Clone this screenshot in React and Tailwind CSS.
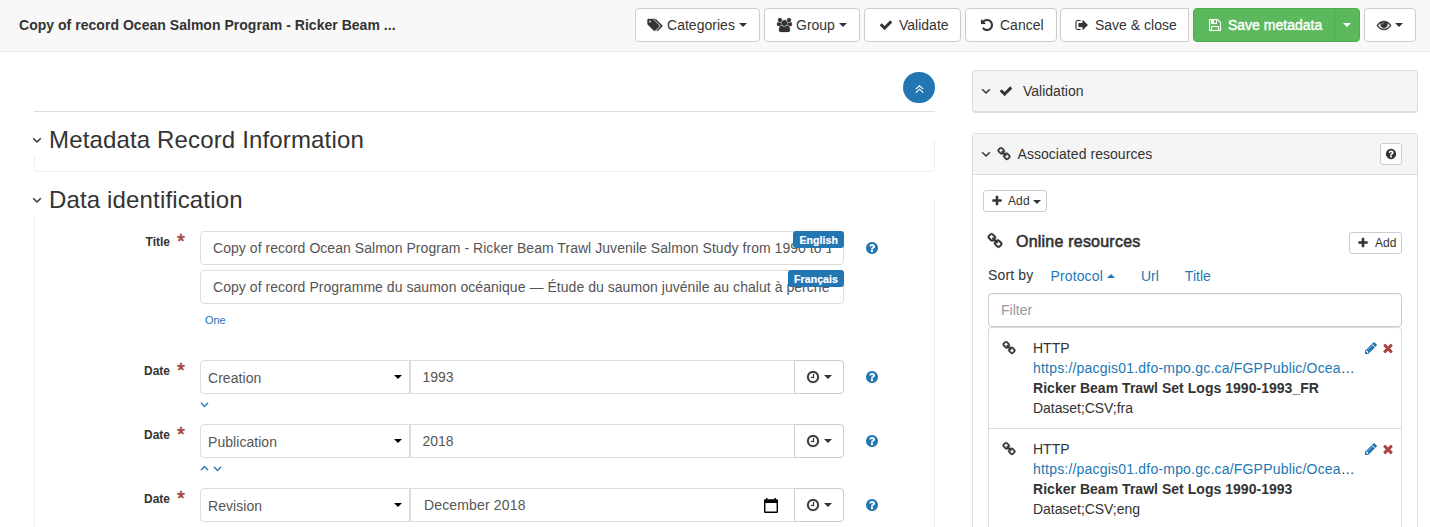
import React from "react";

const PATHS = {
  tags: "M384 448q0-53-37.5-90.5t-90.5-37.5-90.5 37.5-37.5 90.5 37.5 90.5 90.5 37.5 90.5-37.5 37.5-90.5zm1067 576q0 53-37 90l-491 492q-39 37-91 37-53 0-90-37l-715-716q-38-37-64.5-101t-26.5-117v-416q0-52 38-90t90-38h416q53 0 117 26.5t102 64.5l715 714q37 39 37 91zm384 0q0 53-37 90l-491 492q-39 37-91 37-36 0-59-14t-53-45l470-470q37-37 37-90 0-52-37-91l-715-714q-38-38-102-64.5t-117-26.5h224q53 0 117 26.5t102 64.5l715 714q37 39 37 91z",
  users: "M593 896q-162 5-265 128h-134q-82 0-138-40.5t-56-118.5q0-353 124-353 6 0 43.5 21t97.5 42.5 119 21.5q67 0 133-23-5 37-5 66 0 139 81 256zm1071 637q0 120-73 189.5t-194 69.5h-874q-121 0-194-69.5t-73-189.5q0-53 3.5-103.5t14-109 26.5-108.5 43-97.5 62-81 85.5-53.5 111.5-20q10 0 43 21.5t73 48 107 48 135 21.5 135-21.5 107-48 73-48 43-21.5q61 0 111.5 20t85.5 53.5 62 81 43 97.5 26.5 108.5 14 109 3.5 103.5zm-1024-1277q0 106-75 181t-181 75-181-75-75-181 75-181 181-75 181 75 75 181zm704 384q0 159-112.5 271.5t-271.5 112.5-271.5-112.5-112.5-271.5 112.5-271.5 271.5-112.5 271.5 112.5 112.5 271.5zm576 225q0 78-56 118.5t-138 40.5h-134q-103-123-265-128 81-117 81-256 0-29-5-66 66 23 133 23 59 0 119-21.5t97.5-42.5 43.5-21q124 0 124 353zm-128-609q0 106-75 181t-181 75-181-75-75-181 75-181 181-75 181 75 75 181z",
  check: "M1671 566q0 40-28 68l-724 724-136 136q-28 28-68 28t-68-28l-136-136-362-362q-28-28-28-68t28-68l136-136q28-28 68-28t68 28l294 295 656-657q28-28 68-28t68 28l136 136q28 28 28 68z",
  undo: "M1664 896q0 156-61 298t-164 245-245 164-298 61q-172 0-327-72.5t-264-204.5q-7-10-6.5-22.5t8.5-20.5l137-138q10-9 25-9 16 2 23 12 73 95 179 147t225 52q104 0 198.5-40.5t163.5-109.5 109.5-163.5 40.5-198.5-40.5-198.5-109.5-163.5-163.5-109.5-198.5-40.5q-98 0-188 35.5t-160 101.5l137 138q31 30 14 69-17 40-59 40h-448q-26 0-45-19t-19-45v-448q0-42 40-59 39-17 69 14l130 129q107-101 244.5-156.5t284.5-55.5q156 0 298 61t245 164 164 245 61 298z",
  signOut: "M704 1440q0 4 1 20t.5 26.5-3 23.5-10 19.5-20.5 6.5h-320q-119 0-203.5-84.5t-84.5-203.5v-704q0-119 84.5-203.5t203.5-84.5h320q13 0 22.5 9.5t9.5 22.5q0 4 1 20t.5 26.5-3 23.5-10 19.5-20.5 6.5h-320q-66 0-113 47t-47 113v704q0 66 47 113t113 47h312l11.5 1 11.5 3 8 5.5 7 9 2 13.5zm928-544q0 26-19 45l-544 544q-19 19-45 19t-45-19-19-45v-288h-448q-26 0-45-19t-19-45v-384q0-26 19-45t45-19h448v-288q0-26 19-45t45-19 45 19l544 544q19 19 19 45z",
  save: "M512 1536h768v-384h-768v384zm896 0h128v-896q0-14-10-38.5t-20-34.5l-281-281q-10-10-34-20t-39-10v416q0 40-28 68t-68 28h-576q-40 0-68-28t-28-68v-416h-128v1280h128v-416q0-40 28-68t68-28h832q40 0 68 28t28 68v416zm-384-928v-320q0-13-9.5-22.5t-22.5-9.5h-192q-13 0-22.5 9.5t-9.5 22.5v320q0 13 9.5 22.5t22.5 9.5h192q13 0 22.5-9.5t9.5-22.5zm640 32v928q0 40-28 68t-68 28h-1344q-40 0-68-28t-28-68v-1344q0-40 28-68t68-28h928q40 0 88 20t76 48l280 280q28 28 48 76t20 88z",
  eye: "M1664 960q-152-236-381-353 61 104 61 225 0 185-131.5 316.5t-316.5 131.5-316.5-131.5-131.5-316.5q0-121 61-225-229 117-381 353 133 205 333.5 326.5t434.5 121.5 434.5-121.5 333.5-326.5zm-720-384q0-20-14-34t-34-14q-125 0-214.5 89.5t-89.5 214.5q0 20 14 34t34 14 34-14 14-34q0-86 61-147t147-61q20 0 34-14t14-34zm848 384q0 34-20 69-140 230-376.5 368.5t-499.5 138.5-499.5-139-376.5-368q-20-35-20-69t20-69q140-229 376.5-368t499.5-139 499.5 139 376.5 368q20 35 20 69z",
  link: "M1520 1216q0-40-28-68l-208-208q-28-28-68-28-42 0-72 32 3 3 19 18.5t21.5 21.5 15 19 13 25.5 3.5 27.5q0 40-28 68t-68 28q-15 0-27.5-3.5t-25.5-13-19-15-21.5-21.5-18.5-19q-33 31-33 73 0 40 28 68l206 207q27 27 68 27 40 0 68-26l147-146q28-28 28-67zm-703-705q0-40-28-68l-206-207q-28-28-68-28-39 0-68 27l-147 146q-28 28-28 67 0 40 28 68l208 208q27 27 68 27 42 0 72-31-3-3-19-18.5t-21.5-21.5-15-19-13-25.5-3.5-27.5q0-40 28-68t68-28q15 0 27.5 3.5t25.5 13 19 15 21.5 21.5 18.5 19q33-31 33-73zm895 705q0 120-85 203l-147 146q-83 83-203 83-121 0-204-85l-206-207q-83-83-83-203 0-123 88-209l-88-88q-86 88-208 88-120 0-204-84l-208-208q-84-84-84-204t85-203l147-146q83-83 203-83 121 0 204 85l206 207q83 83 83 203 0 123-88 209l88 88q86-88 208-88 120 0 204 84l208 208q84 84 84 204z",
  help: "M1024 1376v-192q0-14-9-23t-23-9h-192q-14 0-23 9t-9 23v192q0 14 9 23t23 9h192q14 0 23-9t9-23zm256-672q0-88-55.5-163t-138.5-116-170-41q-243 0-371 213-15 24 8 42l132 100q7 6 19 6 16 0 25-12 53-68 86-92 34-24 86-24 48 0 85.5 26t37.5 59q0 38-20 61t-68 45q-63 28-115.5 86.5t-52.5 125.5v36q0 14 9 23t23 9h192q14 0 23-9t9-23q0-19 21.5-49.5t54.5-49.5q32-18 49-28.5t46-35 44.5-48 28-60.5 12.5-81zm384 192q0 209-103 385.5t-279.5 279.5-385.5 103-385.5-103-279.5-279.5-103-385.5 103-385.5 279.5-279.5 385.5-103 385.5 103 279.5 279.5 103 385.5z",
  plus: "M1600 736v192q0 40-28 68t-68 28h-416v416q0 40-28 68t-68 28h-192q-40 0-68-28t-28-68v-416h-416q-40 0-68-28t-28-68v-192q0-40 28-68t68-28h416v-416q0-40 28-68t68-28h192q40 0 68 28t28 68v416h416q40 0 68 28t28 68z",
  pencil: "M491 1536l91-91-235-235-91 91v107h128v128h107zm523-928q0-22-22-22-10 0-17 7l-542 542q-7 7-7 17 0 22 22 22 10 0 17-7l542-542q7-7 7-17zm-54-192l416 416-832 832h-416v-416zm683 96q0 53-37 90l-166 166-416-416 166-165q36-38 90-38 53 0 91 38l235 234q37 39 37 91z",
  times: "M1490 1322q0 40-28 68l-136 136q-28 28-68 28t-68-28l-294-294-294 294q-28 28-68 28t-68-28l-136-136q-28-28-28-68t28-68l294-294-294-294q-28-28-28-68t28-68l136-136q28-28 68-28t68 28l294 294 294-294q28-28 68-28t68 28l136 136q28 28 28 68t-28 68l-294 294 294 294q28 28 28 68z",
  clock: "M1024 544v448q0 14-9 23t-23 9h-320q-14 0-23-9t-9-23v-64q0-14 9-23t23-9h224v-352q0-14 9-23t23-9h64q14 0 23 9t9 23zm416 352q0-148-73-273t-198-198-273-73-273 73-198 198-73 273 73 273 198 198 273 73 273-73 198-198 73-273zm224 0q0 209-103 385.5t-279.5 279.5-385.5 103-385.5-103-279.5-279.5-103-385.5 103-385.5 279.5-279.5 385.5-103 385.5 103 279.5 279.5 103 385.5z",
  down: "M1395 736q0 13-10 23l-466 466q-10 10-23 10t-23-10l-466-466q-10-10-10-23t10-23l50-50q10-10 23-10t23 10l393 393 393-393q10-10 23-10t23 10l50 50q10 10 10 23z",
};

/* Extra outline weight for the thinner glyphs, in path units. */
const WEIGHT = { down: 70, tags: 50, link: 50, eye: 50, users: 30, clock: 30, save: 20, signOut: 20, undo: 20 };

function Icon({ name, wide, className = "size-3.5" }) {
  return (
    <svg
      viewBox={wide ? "0 0 1920 1792" : "0 0 1792 1792"}
      className={"shrink-0 overflow-visible " + className}
      fill="currentColor"
      stroke="currentColor"
      strokeWidth={WEIGHT[name] || 0}
      aria-hidden="true"
    >
      <path d={PATHS[name]} />
    </svg>
  );
}

function Caret({ className = "" }) {
  return (
    <svg viewBox="0 0 8 4" className={"h-1 w-2 shrink-0 " + className} fill="currentColor" aria-hidden="true">
      <path d="M0 0h8L4 4z" />
    </svg>
  );
}

function Button({ className = "", children }) {
  return (
    <button className={"flex h-[34px] items-center rounded border border-[#ccc] bg-white whitespace-nowrap " + className}>
      {children}
    </button>
  );
}

function Header() {
  return (
    <header className="flex h-[52px] items-start justify-between border-b border-[#e7e7e7] bg-[#f8f8f8] pt-2 pr-3.5 pl-[19px]">
      <h1 className="mt-[7px] text-sm leading-5 font-bold tracking-[0.03px]">Copy of record Ocean Salmon Program - Ricker Beam ...</h1>
      <div className="flex">
        <Button className="mr-1 w-[125px] pl-3">
          <Icon name="tags" wide className="h-3.5 w-[15px]" />
          <span className="ml-1 tracking-[0.02px]">Categories</span>
          <Caret className="ml-1" />
        </Button>
        <Button className="mr-1 w-24 pl-3">
          <Icon name="users" wide className="h-3.5 w-[15px]" />
          <span className="ml-1">Group</span>
          <Caret className="ml-1" />
        </Button>
        <Button className="mr-1 w-[97px] pl-3.5">
          <Icon name="check" />
          <span className="ml-1.5">Validate</span>
        </Button>
        <Button className="mr-[3px] w-[92px] pl-3.5">
          <Icon name="undo" />
          <span className="ml-1.5">Cancel</span>
        </Button>
        <Button className="mr-1 w-[129px] rounded-r-none pl-3.5">
          <Icon name="signOut" />
          <span className="ml-1.5">Save &amp; close</span>
        </Button>
        <div className="mr-1 flex h-[34px] w-[167px] rounded border border-[#4cae4c] bg-[#5cb85c] text-white">
          <button className="flex w-[141px] items-center border-r border-[#4cae4c] pl-3.5 whitespace-nowrap">
            <Icon name="save" />
            <span className="ml-1.5 [-webkit-text-stroke:0.4px_white]">Save metadata</span>
          </button>
          <button className="flex flex-1 items-center justify-center" aria-label="More save options">
            <Caret />
          </button>
        </div>
        <Button className="w-[52px] pl-3">
          <Icon name="eye" />
          <Caret className="ml-1" />
        </Button>
      </div>
    </header>
  );
}

function Legend({ children }) {
  return (
    <h2 className="-mt-4 -ml-[5px] flex h-8 w-[400px] items-center bg-white text-2xl leading-8">
      <Icon name="down" />
      <span className="ml-[5px] tracking-[0.15px] whitespace-nowrap">{children}</span>
    </h2>
  );
}

function Label({ children }) {
  return (
    <label className="flex w-[165px] shrink-0 justify-end pt-px pr-[15px] text-xs leading-5 font-bold">
      <span>{children}</span>
      <span className="-mt-px ml-[7px] h-5 w-2 text-xl leading-5 font-normal text-[#a94442] [-webkit-text-stroke:0.6px_#a94442]">*</span>
    </label>
  );
}

function Help() {
  return (
    <div className="ml-[21px] flex h-[34px] items-center text-[#2277b3]">
      <Icon name="help" />
    </div>
  );
}

function LangInput({ lang, children }) {
  return (
    <div className="relative flex h-[34px] w-[644px] items-center rounded border border-[#ddd] px-3 text-[#555]">
      <span className="w-[619px] overflow-hidden tracking-[0.045px] whitespace-nowrap">{children}</span>
      <span className="absolute -top-px -right-px flex h-[17px] items-center rounded-[3px] bg-[#2277b3] px-1.5 text-[10.5px] font-bold tracking-[0.1px] text-white [-webkit-text-stroke:0.2px_white]">
        {lang}
      </span>
    </div>
  );
}

function DateRow({ type, value, month, arrows }) {
  return (
    <div className="flex h-16">
      <Label>Date</Label>
      <div>
        <div className="flex h-[34px] w-[644px] text-[#555]">
          <div className="flex w-[210px] items-center justify-between rounded-l border border-[#ddd] pr-[7px] pl-[7px]">
            <span className="pt-0.5 tracking-[0.05px]">{type}</span>
            <Caret className="text-black" />
          </div>
          <div className={"flex flex-1 items-center justify-between border-y border-l border-[#ddd] " + (month ? "pr-4 pl-[13px]" : "pl-[11.5px]")}>
            <span className={month ? "tracking-[0.15px]" : ""}>{value}</span>
            {month && (
              <svg viewBox="0 0 14 15" className="h-[15px] w-3.5 text-black" fill="currentColor" aria-hidden="true">
                <path d="M2 0h1.500v1.300h7V0H12v1.300h.8A1.200 1.200 0 0 1 14 2.500V13.800A1.200 1.200 0 0 1 12.800 15H1.200A1.200 1.200 0 0 1 0 13.800V2.500A1.200 1.200 0 0 1 1.200 1.300H2zM1.400 5v8.600h11.200V5z" />
              </svg>
            )}
          </div>
          <button className="flex w-[50px] items-center rounded-r border border-[#ccc] pl-[11px] text-[#333]">
            <Icon name="clock" />
            <Caret className="ml-1" />
          </button>
        </div>
        <div className="-ml-0.5 flex pt-1 text-[#2277b3]">
          {arrows.map((dir) => (
            <Icon key={dir} name="down" className={dir === "up" ? "size-[13px] rotate-180" : "size-[13px]"} />
          ))}
        </div>
      </div>
      <Help />
    </div>
  );
}

function Editor() {
  return (
    <main className="ml-[34px] w-[901px] shrink-0">
      <div className="flex h-[60px] items-start justify-end border-b border-[#ddd] pt-5">
        <button className="flex h-[31px] w-8 items-center justify-center rounded-full bg-[#2277b3] text-white" aria-label="Scroll to top">
          <svg viewBox="0 0 9 8" className="mt-0.5 h-2 w-[9px]" fill="none" stroke="currentColor" strokeWidth="1.100" aria-hidden="true">
            <path d="M.8 4.200 4.500.8l3.700 3.400M.8 7.600l3.700-3.400 3.700 3.400" />
          </svg>
        </button>
      </div>
      <section className="mt-7 flow-root h-8 rounded-b border-x border-b border-[#eee]">
        <Legend>Metadata Record Information</Legend>
      </section>
      <section className="mt-7 flow-root h-[327px] border-x border-[#eee]">
        <Legend>Data identification</Legend>
        <div className="mt-[15px] flex h-[129px]">
          <Label>Title</Label>
          <div className="flex w-[644px] flex-col">
            <LangInput lang="English">Copy of record Ocean Salmon Program - Ricker Beam Trawl Juvenile Salmon Study from 1990 to 1</LangInput>
            <div className="h-[5px]" />
            <LangInput lang="Français">Copy of record Programme du saumon océanique — Étude du saumon juvénile au chalut à perche</LangInput>
            <a className="mt-2 ml-[5px] text-[11px] leading-4 tracking-[-0.1px] text-[#2277b3]">One</a>
          </div>
          <Help />
        </div>
        <DateRow type="Creation" value="1993" arrows={["down"]} />
        <DateRow type="Publication" value="2018" arrows={["up", "down"]} />
        <div className="h-[39px] overflow-hidden">
          <DateRow type="Revision" value="December 2018" month arrows={[]} />
        </div>
      </section>
    </main>
  );
}

function Resource({ title, format }) {
  return (
    <li className="flex h-[101px] border-b border-[#ddd] pt-[10px] pr-[6px] pl-[13px]">
      <Icon name="link" className="mt-[3px] size-3.5" />
      <div className="ml-[17px] flex-1 leading-5">
        <p>HTTP</p>
        <p className="tracking-[0.2px] whitespace-nowrap">
          <span className="text-[#2277b3]">https://pacgis01.dfo-mpo.gc.ca/FGPPublic/Ocea</span>…
        </p>
        <p className="font-bold tracking-[0.03px] whitespace-nowrap">{title}</p>
        <p className="tracking-[-0.05px]">{format}</p>
      </div>
      <div className="mt-[3px] flex gap-[3px]">
        <Icon name="pencil" className="size-3.5 text-[#2277b3]" />
        <Icon name="times" className="size-3.5 text-[#a94442]" />
      </div>
    </li>
  );
}

function SidePanel() {
  return (
    <aside className="mt-[18px] ml-[37px] w-[446px] shrink-0">
      <section className="flex h-[43px] items-center rounded border border-b-2 border-[#ddd] bg-[#f5f5f5] pl-1.5">
        <Icon name="down" />
        <Icon name="check" className="ml-1.5 size-3.5" />
        <span className="ml-2.5">Validation</span>
      </section>
      <section className="mt-5 h-[394px] rounded-t border-x border-t border-[#ddd]">
        <div className="flex h-[41px] items-center border-b border-[#ddd] bg-[#f5f5f5] pr-[15px] pl-1.5">
          <Icon name="down" />
          <Icon name="link" className="ml-[3.5px] size-3.5" />
          <span className="ml-[7px] tracking-[0.05px]">Associated resources</span>
          <button className="ml-auto flex size-[22px] items-center justify-center rounded-[3px] border border-[#ccc] bg-white" aria-label="Help">
            <Icon name="help" className="size-3" />
          </button>
        </div>
        <button className="mt-[15px] ml-[10px] flex h-[22px] w-16 items-center rounded-[3px] border border-[#ccc] pl-[7px] text-xs">
          <Icon name="plus" className="size-3" />
          <span className="ml-[5px] tracking-[0.1px]">Add</span>
          <Caret className="mt-0.5 ml-[3.5px]" />
        </button>
        <div className="mr-[15px] ml-[15px]">
          <div className="mt-5 flex h-[22px]">
            <Icon name="link" className="mt-px -ml-px size-4" />
            <h3 className="ml-[13px] text-base leading-5 tracking-[0.22px] [-webkit-text-stroke:0.6px_#333]">Online resources</h3>
            <button className="ml-auto flex h-[22px] w-[53px] items-center rounded-[3px] border border-[#ccc] pl-[7px] text-xs">
              <Icon name="plus" className="size-3" />
              <span className="ml-1.5">Add</span>
            </button>
          </div>
          <div className="mt-[11px] flex h-7 leading-5">
            <span className="tracking-[0.15px]">Sort by</span>
            <a className="mt-px ml-[17px] flex items-start tracking-[0.15px] text-[#2277b3]">
              Protocol
              <Caret className="mt-2 ml-1 rotate-180" />
            </a>
            <a className="mt-px ml-[26px] text-[#2277b3]">Url</a>
            <a className="mt-px ml-[26px] text-[#2277b3]">Title</a>
          </div>
          <div className="flex h-[34px] items-center rounded border border-[#ccc] px-3 text-[#999] shadow-[inset_0_1px_1px_rgba(0,0,0,0.075)]">Filter</div>
          <ul className="h-[200px] overflow-hidden rounded-t border-x border-t border-[#ddd]">
            <Resource title="Ricker Beam Trawl Set Logs 1990-1993_FR" format="Dataset;CSV;fra" />
            <Resource title="Ricker Beam Trawl Set Logs 1990-1993" format="Dataset;CSV;eng" />
          </ul>
        </div>
      </section>
    </aside>
  );
}

export default function App() {
  return (
    <div className="h-[527px] w-[1430px] overflow-hidden bg-white font-['Liberation_Sans',Arial,sans-serif] text-sm leading-5 text-[#333]">
      <Header />
      <div className="flex">
        <Editor />
        <SidePanel />
      </div>
    </div>
  );
}
